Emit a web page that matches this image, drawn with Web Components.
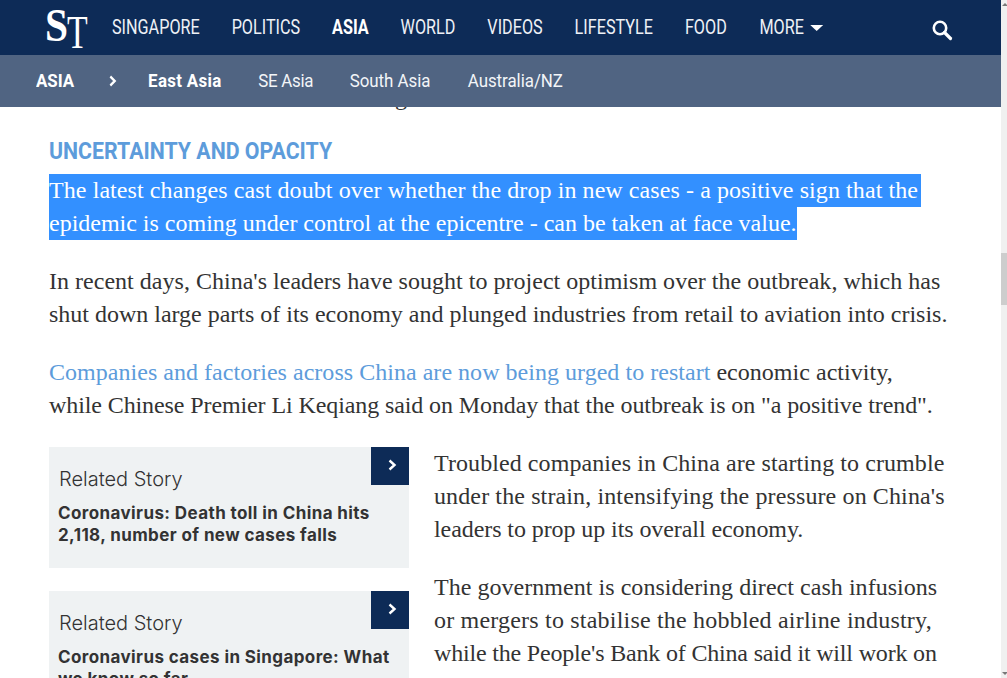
<!DOCTYPE html>
<html><head><meta charset="utf-8">
<style>
html,body{margin:0;padding:0;height:678px;overflow:hidden;background:#fff}
body{display:flex;font-family:"Liberation Serif",serif}
st-page{flex:1;min-width:0}
</style></head><body>
<st-page>
<st-header></st-header>
<st-article></st-article>
</st-page>
<st-scrollbar></st-scrollbar>
<template id="t-header">
<style>
:host{display:block;position:relative;z-index:2}
.top{height:55px;background:#0d2b57;display:flex;align-items:center;padding-left:45px;color:#eef1f6;font:400 20px/1 Roboto,sans-serif}
.logo{flex:0 0 67px;display:flex;height:55px;color:#fff;font-family:"Liberation Serif",serif;font-weight:700;font-size:47px;line-height:1}
.logo span{display:block;transform-origin:left top}
.logo .s{margin-top:2px;width:23px;transform:scaleX(.88)}
.logo .t{margin-top:9px;margin-left:-1px;font-weight:400;transform:scaleX(.72)}
nav{flex:1;min-width:0;display:flex;gap:39.4px;white-space:nowrap;transform:scaleX(.81);transform-origin:left center;margin-top:-2px}
nav b{font-weight:700;color:#fff}
.more{display:flex;align-items:center;gap:8px;margin-left:1px}
.caret{width:0;height:0;border:6.5px solid transparent;border-top-color:#fff;border-left-width:8px;border-right-width:8px;border-bottom:0;margin-top:3px}
.search{margin-right:48px;display:flex;margin-top:5px}
.sub{height:52px;background:#506482;color:#f3f5f8;font:400 19px/52px Roboto,sans-serif}
.in{display:flex;align-items:center;height:52px;padding-left:36px;white-space:nowrap;transform:scaleX(.89);transform-origin:36px center}
.sub b{font-weight:700;color:#fff}
.sub .chev{margin:0 35px 0 39px;display:flex}
.sub .items{display:flex;gap:41px}
.sub .items b{letter-spacing:.35px}
.sub .se{letter-spacing:-.3px}
.sub .sa{letter-spacing:-.05px}
.sub .au{margin-left:1px;letter-spacing:-.05px}
</style>
<div class="top">
<div class="logo"><span class="s">S</span><span class="t">T</span></div>
<nav><span>SINGAPORE</span><span>POLITICS</span><b>ASIA</b><span>WORLD</span><span>VIDEOS</span><span>LIFESTYLE</span><span>FOOD</span><span class="more">MORE <i class="caret"></i></span></nav>
<div class="search"><svg width="22" height="22" viewBox="0 0 22 22" fill="none" stroke="#fff"><circle cx="9" cy="9" r="6.2" stroke-width="2.6"/><path d="M13.5 13.5 L19.5 19.5" stroke-width="3.2" stroke-linecap="round"/></svg></div>
</div>
<div class="sub"><div class="in"><b>ASIA</b><span class="chev"><svg width="9" height="12" viewBox="0 0 9 12" fill="none" stroke="#fff" stroke-width="2.4"><path d="M1.5 1.5 L6.5 6 L1.5 10.5"/></svg></span>
<div class="items"><b>East Asia</b><span class="se">SE Asia</span><span class="sa">South Asia</span><span class="au">Australia/NZ</span></div></div></div>
</template>
<template id="t-article">
<style>
:host{display:block;padding:0 50px 0 49px;color:#333;font:24px/33px "Liberation Serif",serif;letter-spacing:0;height:571px;overflow:hidden;position:relative}
.peek{height:0;margin-left:346px;position:relative;top:-26px}
h3{margin:31px 0 0;font:700 23.5px/26px Roboto,sans-serif;color:#5d9cdb;transform:scaleX(.907);transform-origin:left center;white-space:nowrap}
.sel{margin:10px 0 25px}
.sel span{display:block;width:fit-content;background:#3390ff;color:#fff}
.sel span:first-child{padding-right:3px;letter-spacing:.08px}
p{margin:0 0 25px}
a{color:#5d9cdb;text-decoration:none}
.ln{display:block;white-space:nowrap}
.cols{display:flex;gap:25px;margin-top:25px}
.left{flex:0 0 360px;display:flex;flex-direction:column;gap:23px}
.right{flex:1;min-width:0}
</style>
<div class="peek">g</div>
<h3>UNCERTAINTY AND OPACITY</h3>
<div class="sel"><span>The latest changes cast doubt over whether the drop in new cases - a positive sign that the</span><span style="letter-spacing:-.01px">epidemic is coming under control at the epicentre - can be taken at face value.</span></div>
<p><span class="ln" style="letter-spacing:.02px">In recent days, China's leaders have sought to project optimism over the outbreak, which has</span><span class="ln" style="letter-spacing:-.01px">shut down large parts of its economy and plunged industries from retail to aviation into crisis.</span></p>
<p><span class="ln" style="letter-spacing:.03px"><a>Companies and factories across China are now being urged to restart</a> economic activity,</span><span class="ln" style="letter-spacing:-.1px">while Chinese Premier Li Keqiang said on Monday that the outbreak is on "a positive trend".</span></p>
<div class="cols">
<div class="left">
<st-related>Coronavirus: Death toll in China hits 2,118, number of new cases falls</st-related>
<st-related>Coronavirus cases in Singapore: What we know so far</st-related>
</div>
<div class="right">
<p><span class="ln" style="letter-spacing:.08px">Troubled companies in China are starting to crumble</span><span class="ln" style="letter-spacing:.12px">under the strain, intensifying the pressure on China's</span><span class="ln" style="letter-spacing:-.08px">leaders to prop up its overall economy.</span></p>
<p><span class="ln" style="letter-spacing:.04px">The government is considering direct cash infusions</span><span class="ln" style="letter-spacing:.2px">or mergers to stabilise the hobbled airline industry,</span><span class="ln" style="letter-spacing:-.18px">while the People's Bank of China said it will work on</span><span class="ln">preventing dramatic corporate issues.</span></p>
</div>
</div>
</template>
<template id="t-related">
<style>
:host{display:block;position:relative;background:#eff2f3;height:121px;box-sizing:border-box;padding:19px 10px 0 9px;color:#333;letter-spacing:0}
.l{font:300 20px/26px Inter,sans-serif;margin-bottom:10px;margin-left:1px}
.t{font:700 17px/22px Inter,sans-serif;letter-spacing:.4px}
.go{position:absolute;right:0;top:0;width:38px;height:38px;background:#0d2b57;display:flex;align-items:center;justify-content:center;padding:0 0 3px 4px;box-sizing:border-box}
</style>
<div class="l">Related Story</div>
<div class="t"><slot></slot></div>
<div class="go"><svg width="9" height="12" viewBox="0 0 9 12" fill="none" stroke="#fff" stroke-width="2.4"><path d="M1.5 1.5 L6.5 6 L1.5 10.5"/></svg></div>
</template>
<template id="t-scroll">
<style>
:host{display:flex;flex-direction:column;flex:0 0 6px;width:6px;height:678px;background:#f0f0f0;position:relative}
.thumb{height:52px;margin-top:253px;background:#cdcdcd}
.up,.down{position:absolute;left:1px;width:0;height:0;border:3px solid transparent}
.up{top:3px;border-bottom-color:#777;border-top:0}
.down{bottom:3px;border-top-color:#777;border-bottom:0}
</style>
<div class="up"></div><div class="thumb"></div><div class="down"></div>
</template>
<script>
function def(tag,tpl){customElements.define(tag,class extends HTMLElement{constructor(){super();this.attachShadow({mode:"open"}).appendChild(document.getElementById(tpl).content.cloneNode(true))}})}
customElements.define('st-page',class extends HTMLElement{constructor(){super();this.attachShadow({mode:"open"}).innerHTML='<style>:host{display:block}</style><slot></slot>'}});
def('st-header','t-header');def('st-article','t-article');def('st-related','t-related');def('st-scrollbar','t-scroll');
</script>
</body></html>
